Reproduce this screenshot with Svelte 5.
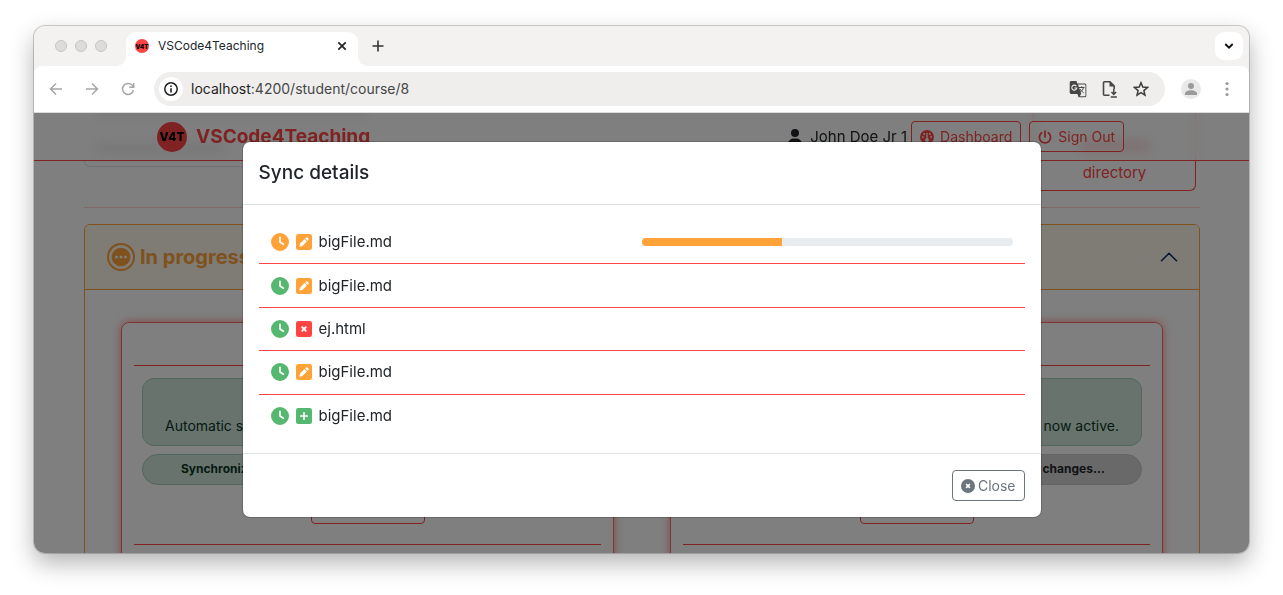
<script>
  const files = [
    { name: 'bigFile.md', state: 'pending', change: 'edit', progress: 38 },
    { name: 'bigFile.md', state: 'done', change: 'edit' },
    { name: 'ej.html', state: 'done', change: 'remove' },
    { name: 'bigFile.md', state: 'done', change: 'edit' },
    { name: 'bigFile.md', state: 'done', change: 'add' }
  ];
  const exercises = [
    { status: 'Synchronized. Your files are up to date right now', tone: 'ok' },
    { status: 'Waiting for the student to make new changes...', tone: 'idle' }
  ];
</script>

{#snippet logo()}
  <span class="logo">V4T</span>
{/snippet}

<div class="desktop">
  <div class="window">
    <div class="tabs">
      <div class="lights"><i></i><i></i><i></i></div>
      <div class="tab">
        {@render logo()}
        <span class="tab-title">VSCode4Teaching</span>
        <button class="plain" aria-label="Close tab">
          <svg width="10" height="10" viewBox="0 0 10 10"><path d="M1.3 1.3l7.4 7.4M8.700 1.3L1.3 8.700" stroke="#222" stroke-width="1.7" /></svg>
        </button>
      </div>
      <button class="plain new-tab" aria-label="New tab">
        <svg width="12" height="12" viewBox="0 0 12 12"><path d="M6 .5v11M.5 6h11" stroke="#333" stroke-width="1.6" /></svg>
      </button>
      <button class="plain tab-search" aria-label="Search tabs">
        <svg width="10" height="8" viewBox="0 0 10 8"><path d="M1.300 2L5 5.700 8.700 2" fill="none" stroke="#111" stroke-width="1.900" /></svg>
      </button>
    </div>

    <div class="toolbar">
      <div class="nav">
        <button class="plain" aria-label="Back">
          <svg width="14" height="14" viewBox="0 0 14 14" fill="none" stroke="#a6a6a6" stroke-width="1.500"><path d="M13 7H1.500M7 1.500L1.500 7 7 12.500" /></svg>
        </button>
        <button class="plain" aria-label="Forward">
          <svg width="14" height="14" viewBox="0 0 14 14" fill="none" stroke="#a6a6a6" stroke-width="1.500"><path d="M1 7h11.500M7 1.500L12.500 7 7 12.500" /></svg>
        </button>
        <button class="plain" aria-label="Reload">
          <svg width="14" height="14" viewBox="0 0 14 14" fill="none" stroke="#a6a6a6" stroke-width="1.500"><path d="M12.400 8A5.500 5.500 0 1 1 11 3.100L12.500 4.700" /><path d="M12.700 1v4.300H8.300" /></svg>
        </button>
      </div>
      <div class="address">
        <button class="plain site" aria-label="Site information">
          <svg width="14" height="14" viewBox="0 0 14 14"><circle cx="7" cy="7" r="6.200" fill="none" stroke="#222" stroke-width="1.500" /><path d="M7 6.200v4.200M7 3.400v1.700" stroke="#222" stroke-width="1.600" /></svg>
        </button>
        <span class="url">localhost<span>:4200/student/course/8</span></span>
        <button class="plain" aria-label="Translate">
          <svg width="18" height="18" viewBox="0 0 18 18">
            <path d="M2 1h5.500l.8 2.500H16A1.500 1.500 0 0 1 17.300 5v11a1.300 1.300 0 0 1-1.300 1.300H9.500L8.500 14H2A1.400 1.400 0 0 1 .7 12.600V2.400A1.400 1.400 0 0 1 2 1z" fill="#474747" />
            <path d="M9 4.500h6.800a.6.600 0 0 1 .6.600v10.600a.6.600 0 0 1-.6.600h-5.300l1.800-2.300z" fill="#efeeed" />
            <path d="M7.300 6.100A2.500 2.500 0 1 0 7.800 8H5.500" fill="none" stroke="#efeeed" stroke-width="1.100" />
            <path d="M10 7.500h5.500M12.700 6.300v1.200M14.500 7.500c-.5 2.200-1.800 3.500-3.500 4.700M11 9c.8 1.500 2 2.700 3.700 3.800" fill="none" stroke="#474747" />
          </svg>
        </button>
        <button class="plain" aria-label="Install">
          <svg width="18" height="18" viewBox="0 0 18 18" fill="none" stroke="#474747" stroke-width="1.600"><path d="M8.500 15.200H3.500a1 1 0 0 1-1-1V2.800a1 1 0 0 1 1-1H9L13.200 6v3" /><path d="M8.500 1.500v5H13.500z" fill="#474747" stroke="none" /><path d="M12.800 9v5M10.500 12l2.300 2.400 2.300-2.400M9.700 17h6.200" stroke-width="1.500" /></svg>
        </button>
        <button class="plain" aria-label="Bookmark">
          <svg width="16" height="16" viewBox="0 0 16 16"><path d="M8 1.700l1.800 4.400 4.700.4-3.600 3.100 1.100 4.600L8 11.700l-4 2.500 1.100-4.600L1.500 6.500l4.700-.4z" fill="none" stroke="#3c3c3c" stroke-width="1.500" /></svg>
        </button>
      </div>
      <button class="plain" aria-label="Profile">
        <svg width="20" height="20" viewBox="0 0 20 20"><circle cx="10" cy="10" r="10" fill="#e9e9e9" /><circle cx="10" cy="7" r="3" fill="#9b9b9b" /><path d="M4 16v-1.500c0-2 3-3.300 6-3.300s6 1.300 6 3.300V16z" fill="#9b9b9b" /></svg>
      </button>
      <button class="plain" aria-label="Menu">
        <svg width="4" height="16" viewBox="0 0 4 16" fill="#9b9b9b"><circle cx="2" cy="2.500" r="1.600" /><circle cx="2" cy="8" r="1.600" /><circle cx="2" cy="13.500" r="1.600" /></svg>
      </button>
    </div>

    <div class="page">
      <header class="site-header">
        <a class="brand" href="/">{@render logo()}VSCode4Teaching</a>
        <span class="user">
          <svg width="14" height="16" viewBox="0 0 448 512" fill="#212529"><path d="M224 256A128 128 0 1 0 224 0a128 128 0 1 0 0 256zm-45.700 48C79.800 304 0 383.800 0 482.300C0 498.700 13.300 512 29.700 512H418.300c16.400 0 29.700-13.300 29.700-29.700C448 383.800 368.200 304 269.700 304H178.300z" /></svg>
          John Doe Jr 1
        </span>
        <button class="btn danger">
          <svg width="14" height="14" viewBox="0 0 14 14"><circle cx="7" cy="7" r="7" fill="#ff4444" /><path d="M7 3v6" stroke="#fff" stroke-width="1.300" /><circle cx="7" cy="10" r="1.900" fill="#fff" /><g fill="#fff"><circle cx="4.200" cy="4" r=".9" /><circle cx="9.800" cy="4" r=".9" /><circle cx="2.900" cy="7" r=".9" /><circle cx="11.100" cy="7" r=".9" /></g></svg>
          Dashboard
        </button>
        <button class="btn danger">
          <svg width="14" height="14" viewBox="0 0 14 14" fill="none" stroke="#ff4444" stroke-width="1.700" stroke-linecap="round"><path d="M7 1v6M3.700 2.800a5.600 5.600 0 1 0 6.600 0" /></svg>
          Sign Out
        </button>
      </header>

      <main class="content">
        <div class="course">
          <div class="course-card"><i class="line long"></i><i class="line short"></i></div>
          <button class="directory"><i class="line tint"></i>directory</button>
        </div>
        <hr class="soft" />
        <section class="accordion">
          <h2 class="acc-head">
            <svg width="28" height="28" viewBox="0 0 28 28"><circle cx="14" cy="14" r="13" fill="none" stroke="#ffa339" stroke-width="2" /><circle cx="14" cy="14" r="9.300" fill="#ffa339" /><g fill="#fff"><circle cx="9.500" cy="14" r="1.500" /><circle cx="14" cy="14" r="1.500" /><circle cx="18.500" cy="14" r="1.500" /></g></svg>
            <span>In progress</span>
            <svg width="20" height="20" viewBox="0 0 16 16"><path d="M2 11l6-6 6 6" fill="none" stroke="#052c65" stroke-width="1.200" stroke-linecap="round" stroke-linejoin="round" /></svg>
          </h2>
          <div class="cards">
            {#each exercises as ex}
              <article class="card {ex.tone}">
                <hr />
                <p class="alert">Automatic synchronization with the server is now active.</p>
                <p class="pill">{ex.status}</p>
                <button class="btn danger wide">Open</button>
                <hr />
              </article>
            {/each}
          </div>
        </section>
      </main>

      <div class="backdrop">
        <div class="modal" role="dialog" aria-modal="true" aria-labelledby="sync-title">
          <h1 id="sync-title">Sync details</h1>
          <ul>
            {#each files as file}
              <li>
                <span class="file">
                  <svg class={file.state} width="18" height="18" viewBox="0 0 512 512" fill="currentColor"><path d="M256 0a256 256 0 1 1 0 512A256 256 0 1 1 256 0zM232 120V256c0 8 4 15.500 10.700 20l96 64c11 7.400 25.900 4.400 33.300-6.700s4.400-25.900-6.700-33.300L280 243.200V120c0-13.300-10.700-24-24-24s-24 10.700-24 24z" /></svg>
                  <svg class={file.change} width="16" height="16" viewBox="0 0 16 16">
                    <rect width="16" height="16" rx="2.300" fill="currentColor" />
                    {#if file.change === 'edit'}
                      <path d="M3.300 12.700l.8-3.100 4.500-4.500 2.300 2.300-4.500 4.500zM9.200 4.500l.9-.9a1 1 0 0 1 1.400 0l.9.9a1 1 0 0 1 0 1.400l-.9.900z" fill="#fff" />
                    {:else if file.change === 'remove'}
                      <path d="M5.700 5.700l4.600 4.600M10.300 5.700l-4.600 4.600" stroke="#fff" stroke-width="1.900" />
                    {:else}
                      <path d="M8 4.800v6.400M4.800 8h6.400" stroke="#fff" stroke-width="1.700" stroke-linecap="round" />
                    {/if}
                  </svg>
                  <span>{file.name}</span>
                </span>
                {#if file.progress}
                  <div class="progress" role="progressbar" aria-label={file.name} aria-valuenow={file.progress} aria-valuemin="0" aria-valuemax="100">
                    <div style:width="{file.progress}%"></div>
                  </div>
                {/if}
              </li>
            {/each}
          </ul>
          <footer>
            <button class="btn secondary">
              <svg width="14" height="14" viewBox="0 0 14 14"><circle cx="7" cy="7" r="7" fill="#6c757d" /><path d="M5.100 5.100l3.800 3.800M8.900 5.100L5.100 8.900" stroke="#fff" stroke-width="1.500" /></svg>
              Close
            </button>
          </footer>
        </div>
      </div>
    </div>
  </div>
</div>

<style>
  :global(body) { background: #fff; }
  .desktop, .desktop * { box-sizing: border-box; }
  .desktop {
    height: 100vh;
    padding: 26px 34px 42px;
    font-family: Inter, "Liberation Sans", sans-serif;
    color: #212529;
  }
  svg { display: block; flex: none; }
  button { font-family: inherit; cursor: pointer; }
  .plain { display: grid; place-items: center; padding: 0; border: 0; background: none; }
  hr { width: 100%; margin: 0; border: 0; border-top: 1px solid #ff4444; }

  .window {
    display: flex;
    flex-direction: column;
    height: 100%;
    overflow: hidden;
    border-radius: 11px;
    background: #f3f2f0;
    box-shadow: 0 0 0 1px rgba(0, 0, 0, .18), 0 10px 24px rgba(0, 0, 0, .3);
  }
  .tabs { display: flex; align-items: center; height: 40px; padding: 0 6px 0 21px; }
  .lights { display: flex; gap: 8px; margin-right: 19px; }
  .lights i { width: 12px; height: 12px; border: 1px solid #c6c5c4; border-radius: 50%; background: #dddcdb; }
  .tab {
    position: relative;
    display: flex;
    align-items: center;
    align-self: flex-end;
    gap: 9px;
    width: 232px;
    height: 34px;
    padding: 0 11px 6px 9px;
    border-radius: 10px 10px 0 0;
    background: #fff;
    font-size: 12px;
  }
  .tab::before, .tab::after { content: ""; position: absolute; bottom: 0; width: 10px; height: 10px; }
  .tab::before { right: 100%; background: radial-gradient(circle at 0 0, transparent 10px, #fff 10px); }
  .tab::after { left: 100%; background: radial-gradient(circle at 100% 0, transparent 10px, #fff 10px); }
  .tab-title { flex: 1; padding-bottom: 2px; }
  .logo {
    display: grid;
    place-items: center;
    flex: none;
    width: 30px;
    height: 30px;
    border-radius: 50%;
    background: #ff4444;
    color: #000;
    font-size: 12px;
    font-weight: 800;
  }
  .tab .logo { width: 14px; height: 14px; font-size: 6px; font-weight: 900; }
  .new-tab { margin-left: 14px; }
  .tab-search { width: 28px; height: 28px; margin-left: auto; border-radius: 9px; background: #fff; }

  .toolbar {
    display: flex;
    align-items: center;
    height: 47px;
    padding: 0 20px 0 15px;
    border-bottom: 1px solid #dcdcdc;
    border-radius: 8px 8px 0 0;
    background: #fff;
  }
  .nav { display: flex; gap: 22px; margin-right: 19px; }
  .address {
    display: flex;
    flex: 1;
    align-items: center;
    gap: 14px;
    height: 34px;
    margin-right: 16px;
    padding: 0 16px 0 5px;
    border-radius: 17px;
    background: #efeeed;
  }
  .toolbar > .plain + .plain { margin-left: 24px; }
  .site { width: 24px; height: 24px; border-radius: 50%; background: #fff; }
  .url { flex: 1; margin-left: -6px; padding-bottom: 2px; font-size: 14px; color: #1f1f1f; }
  .url span { color: #474747; }

  .page { position: relative; flex: 1; min-height: 0; overflow: hidden; background: #fff; }
  .site-header {
    position: absolute;
    inset: 0 0 auto;
    z-index: 1;
    display: flex;
    align-items: center;
    gap: 8px;
    height: 48px;
    padding: 0 125px 0 123px;
    border-bottom: 1px solid #ff4444;
    background: rgba(255, 255, 255, .6);
    backdrop-filter: blur(5px);
  }
  .brand {
    display: flex;
    align-items: center;
    gap: 9px;
    margin-right: auto;
    color: #ff4444;
    font-size: 19px;
    font-weight: 700;
    text-decoration: none;
  }
  .user { display: flex; align-items: center; gap: 8px; margin-right: -4px; font-size: 15px; }
  .btn {
    display: flex;
    align-items: center;
    gap: 3px;
    height: 31px;
    padding: 0 8px;
    border: 1px solid;
    border-radius: 4px;
    background: none;
    font-size: 14px;
  }
  .danger { gap: 6px; color: #ff4444; }
  .secondary { color: #6c757d; }

  .content { padding: 0 49px 0 50px; }
  .course { display: flex; align-items: flex-start; height: 78px; padding-right: 4px; }
  .course-card {
    flex: 1;
    height: 54px;
    padding: 0 12px;
    border: 1px solid #dee2e6;
    border-top: 0;
    border-radius: 0 0 6px 6px;
  }
  .line { display: block; height: 10px; filter: blur(3px); background: #999; }
  .long { width: 270px; height: 4px; margin-bottom: 26px; opacity: .6; }
  .short { width: 130px; opacity: .4; }
  .tint { width: 70px; margin-bottom: 12px; background: #ff4444; opacity: .5; }
  .directory {
    display: flex;
    flex-direction: column;
    align-items: center;
    justify-content: flex-end;
    width: 163px;
    height: 78px;
    padding: 0 0 8px;
    border: 1px solid #ff4444;
    border-top: 0;
    border-radius: 0 0 6px 6px;
    background: none;
    color: #ff4444;
    font-size: 15px;
  }
  .soft { margin: 16px 0; opacity: .25; }
  .accordion { border: 1px solid #ffa339; border-radius: 6px 6px 0 0; overflow: hidden; }
  .acc-head {
    display: flex;
    align-items: center;
    gap: 5px;
    height: 65px;
    margin: 0;
    padding: 0 20px 0 22px;
    border-bottom: 1px solid #ffa339;
    background: #fff6eb;
    color: #ffa339;
    font-size: 20px;
    font-weight: 700;
  }
  .acc-head span { flex: 1; }
  .cards { display: grid; grid-template-columns: 1fr 1fr; gap: 56px; padding: 32px 36px; }
  .card {
    display: flex;
    flex-direction: column;
    height: 340px;
    padding: 42px 12px;
    border: 1px solid #ff6666;
    border-radius: 8px;
    box-shadow: 0 0 10px rgba(255, 68, 68, .6);
  }
  .alert, .pill { overflow: hidden; border: 1px solid #a3cfbb; background: #d1e7dd; color: #0a3622; white-space: nowrap; }
  .alert { height: 68px; margin: 12px 8px 8px; padding: 37px 22px 0; border-radius: 12px; font-size: 14px; line-height: 20px; }
  .pill { height: 31px; margin: 0 8px; padding: 0 38px; border-radius: 16px; font-size: 12px; font-weight: 700; line-height: 28px; }
  .idle .alert, .idle .pill { direction: ltr; text-align: right; }
  .idle .pill { padding-right: 36px; border-color: #c4c8cb; background: #d3d3d4; color: #212529; }
  .wide { justify-content: center; width: 114px; margin: 8px auto 20px; }

  .backdrop {
    position: absolute;
    inset: 0;
    z-index: 2;
    padding: 28px 16px;
    background: rgba(0, 0, 0, .5);
  }
  .modal {
    max-width: 800px;
    margin: 0 auto;
    border: 1px solid rgba(0, 0, 0, .18);
    border-radius: 8px;
    background: #fff;
    background-clip: padding-box;
  }
  h1 { margin: 0; padding: 16px; border-bottom: 1px solid #dee2e6; font-size: 19px; font-weight: 500; line-height: 30px; }
  ul {
    display: grid;
    grid-template-rows: repeat(5, 1fr);
    min-height: 248px;
    margin: 0;
    padding: 16px 16px 15px;
    list-style: none;
  }
  li { display: grid; grid-template-columns: 1fr 1fr; align-items: center; border-bottom: 1px solid #ff4444; }
  li:last-child { border-bottom-color: transparent; }
  .file { display: flex; align-items: center; gap: 7px; padding-left: 12px; font-size: 15px; line-height: 24px; }
  .pending, .edit { color: #ffa339; }
  .done, .add { color: #56b870; }
  .remove { color: #ff4444; }
  .progress { height: 8px; margin-right: 12px; overflow: hidden; border-radius: 4px; background: #e9ecef; }
  .progress div { height: 100%; background: #ffa339; }
  footer { display: flex; justify-content: flex-end; padding: 16px; border-top: 1px solid #dee2e6; }
</style>
